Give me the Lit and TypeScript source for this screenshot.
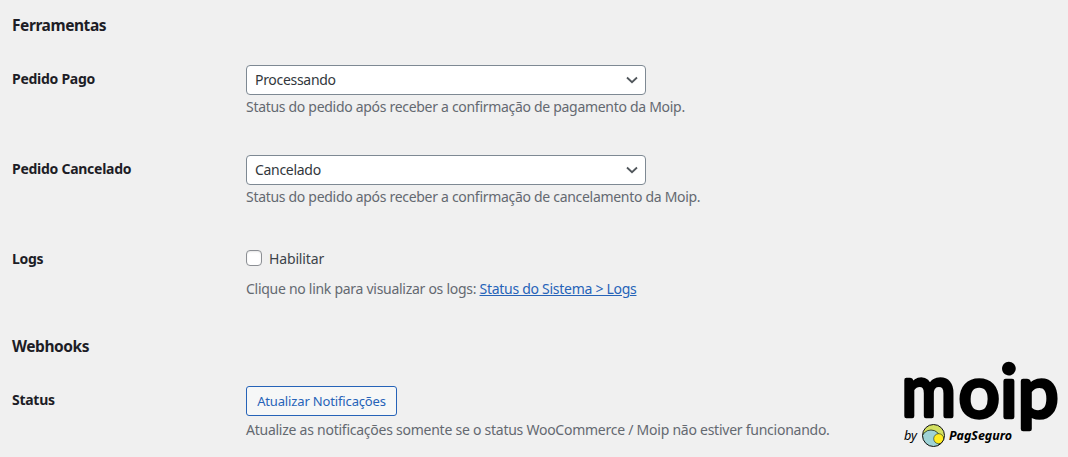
import { LitElement, html, css, svg } from "lit";
import { customElement, property } from "lit/decorators.js";

@customElement("moip-logo")
class MoipLogo extends LitElement {
  static styles = css`
    :host { display: block; width: 156px; height: 90px; }
    svg { display: block; overflow: visible; }
    .word { font: 400 72px "Lato", sans-serif; stroke: #000; stroke-width: 4.6; stroke-linejoin: round; }
    .by { font: italic 400 12.5px "Noto Sans", sans-serif; }
    .brand { font: italic 700 12px "Noto Sans", sans-serif; }
  `;
  render() {
    return html`<svg width="156" height="90" viewBox="903 360 156 90" role="img" aria-label="moip by PagSeguro">
      ${svg`
      <text class="word" y="416.500" transform="translate(905 0) scale(.91 1)" x="-3.700">m</text>
      <text class="word" y="416.500" x="958.800 1000.300 1018">oip</text>
      <text class="by" x="904" y="440" textLength="13" lengthAdjust="spacingAndGlyphs">by</text>
      <defs><clipPath id="ball"><circle cx="933.5" cy="435.500" r="11"/></clipPath></defs>
      <g clip-path="url(#ball)">
        <circle cx="933.5" cy="435.500" r="11" fill="#d3e061"/>
        <circle cx="931" cy="439.500" r="9.500" fill="#9ed3d6" stroke="#1a2a1a" stroke-width=".8"/>
        <circle cx="938.700" cy="438.700" r="5" fill="#ffec1f" stroke="#1a2a1a" stroke-width=".6"/>
      </g>
      <circle cx="933.500" cy="435.500" r="11" fill="none" stroke="#111" stroke-width="1"/>
      <text class="brand" x="949" y="440" textLength="63" lengthAdjust="spacingAndGlyphs">PagSeguro</text>`}
    </svg>`;
  }
}

@customElement("select-field")
class SelectField extends LitElement {
  @property() value = "";
  static styles = css`
    :host {
      display: flex; align-items: center; justify-content: space-between; box-sizing: border-box;
      width: 400px; height: 30px; padding: 0 7px 0 8px; border: 1px solid #7e8993;
      border-radius: 4px; background: #fff; color: #32373c;
    }
    svg { display: block; }
  `;
  render() {
    return html`<span>${this.value}</span>
      <svg width="12" height="8" viewBox="0 0 12 8" fill="none" stroke="#50565b" stroke-width="1.800"><path d="M1 1.500 6 6.200 11 1.500"/></svg>`;
  }
}

@customElement("app-root")
class AppRoot extends LitElement {
  static styles = css`
    :host {
      display: block; box-sizing: border-box; height: 457px; padding-left: 12px; overflow: hidden;
      background: #f0f0f0; color: #3c434a; font: 14px/20px "Noto Sans", sans-serif;
      letter-spacing: -0.3px;
    }
    .title {
      margin: 0; padding: 15px 0; font-size: 15.5px; line-height: 20px; font-weight: 700;
      letter-spacing: -0.43px; color: #1d1d26;
    }
    .row { display: grid; grid-template-columns: 234px 1fr auto; height: 90px; }
    .row.logs { height: 91px; }
    .row.last { height: 86px; }
    .label { padding-top: 19px; font-weight: 700; color: #1d1d26; letter-spacing: -0.27px; }
    .control { padding-top: 15px; white-space: nowrap; }
    .logs .control { padding-top: 19px; }
    .hint { margin: 2px 0 0; color: #646970; }
    .logs .hint { margin-top: 10px; letter-spacing: -0.28px; }
    .last .hint { margin-top: 4px; letter-spacing: -0.25px; }
    .check { display: flex; align-items: center; gap: 7px; letter-spacing: -0.15px; }
    .box {
      box-sizing: border-box; width: 16px; height: 16px; margin: -2px 0 0; border: 1px solid #8c8f94;
      border-radius: 4px; background: #fff; box-shadow: inset 0 1px 2px rgba(0,0,0,.1);
    }
    .link { color: #2663b8; text-decoration: underline; }
    .button {
      display: block; box-sizing: border-box; width: 151px; height: 30px; margin: 0; padding: 0;
      border: 1px solid #2663b8; border-radius: 3px; background: #f6f7f7; color: #2663b8;
      font: 13px/28px "Noto Sans", sans-serif; letter-spacing: -0.15px;
    }
    .brand { margin: -11px 9px 0 0; letter-spacing: 0; }
  `;
  render() {
    return html`
      <h2 class="title">Ferramentas</h2>
      <div class="row">
        <div class="label">Pedido Pago</div>
        <div class="control"><select-field value="Processando"></select-field>
          <p class="hint">Status do pedido após receber a confirmação de pagamento da Moip.</p></div>
      </div>
      <div class="row">
        <div class="label">Pedido Cancelado</div>
        <div class="control"><select-field value="Cancelado"></select-field>
          <p class="hint">Status do pedido após receber a confirmação de cancelamento da Moip.</p></div>
      </div>
      <div class="row logs">
        <div class="label">Logs</div>
        <div class="control"><div class="check"><span class="box"></span><span>Habilitar</span></div>
          <p class="hint">Clique no link para visualizar os logs: <a class="link">Status do Sistema &gt; Logs</a></p></div>
      </div>
      <h2 class="title">Webhooks</h2>
      <div class="row last">
        <div class="label">Status</div>
        <div class="control"><button class="button">Atualizar Notificações</button>
          <p class="hint">Atualize as notificações somente se o status WooCommerce / Moip não estiver funcionando.</p></div>
        <moip-logo class="brand"></moip-logo>
      </div>
    `;
  }
}
